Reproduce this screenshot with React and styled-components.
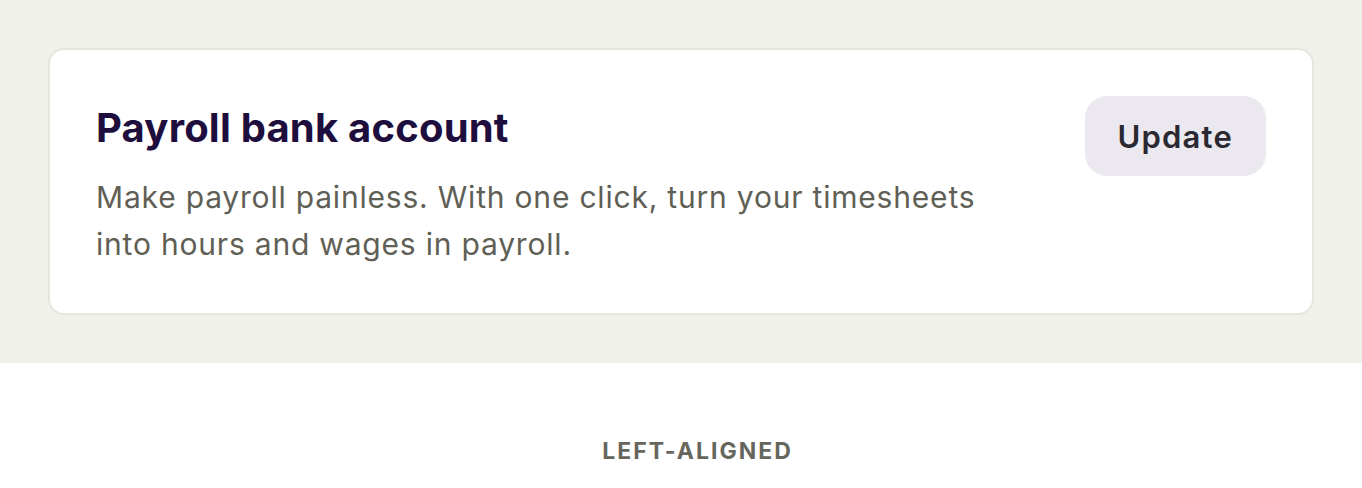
import React from 'react';
import styled, { createGlobalStyle } from 'styled-components';

const GlobalStyle = createGlobalStyle`
  html, body {
    margin: 0;
    padding: 0;
    background: #fff;
    font-family: Inter, "Noto Sans", sans-serif;
  }
`;

const Stage = styled.section`
  background-color: #f1f1ec;
  padding: 48px 48px;
  height: 363px;
  box-sizing: border-box;
`;

const Card = styled.div`
  display: flex;
  justify-content: space-between;
  align-items: flex-start;
  background-color: #fff;
  border: 2px solid #e7e5dc;
  border-radius: 16px;
  padding: 46px 46px 46px 46px;
  height: 267px;
  box-sizing: border-box;
`;

const Text = styled.div`
  display: flex;
  flex-direction: column;
  max-width: 960px;
`;

const Title = styled.h2`
  margin: 0;
  font-size: 40px;
  line-height: 64px;
  font-weight: 700;
  color: #1e0e3e;
  letter-spacing: 0.2px;
`;

const Description = styled.p`
  margin: 14px 0 0;
  font-size: 30px;
  line-height: 47px;
  font-weight: 400;
  color: #5f5f56;
  letter-spacing: 0.8px;
`;

const Button = styled.button`
  flex-shrink: 0;
  height: 80px;
  padding: 0 33px;
  border: none;
  border-radius: 22px;
  background-color: #ebe8ef;
  color: #2a2830;
  font-family: inherit;
  font-size: 31px;
  font-weight: 600;
  letter-spacing: 1.2px;
  cursor: pointer;
`;

const Caption = styled.div`
  padding: 74px 0 0 33px;
  text-align: center;
  font-size: 23px;
  font-weight: 700;
  letter-spacing: 2px;
  color: #66665d;
`;

export default function App() {
  return (
    <>
      <GlobalStyle />
      <Stage>
        <Card>
          <Text>
            <Title>Payroll bank account</Title>
            <Description>
              Make payroll painless. With one click, turn your timesheets
              <br />
              into hours and wages in payroll.
            </Description>
          </Text>
          <Button>Update</Button>
        </Card>
      </Stage>
      <Caption>LEFT-ALIGNED</Caption>
    </>
  );
}
